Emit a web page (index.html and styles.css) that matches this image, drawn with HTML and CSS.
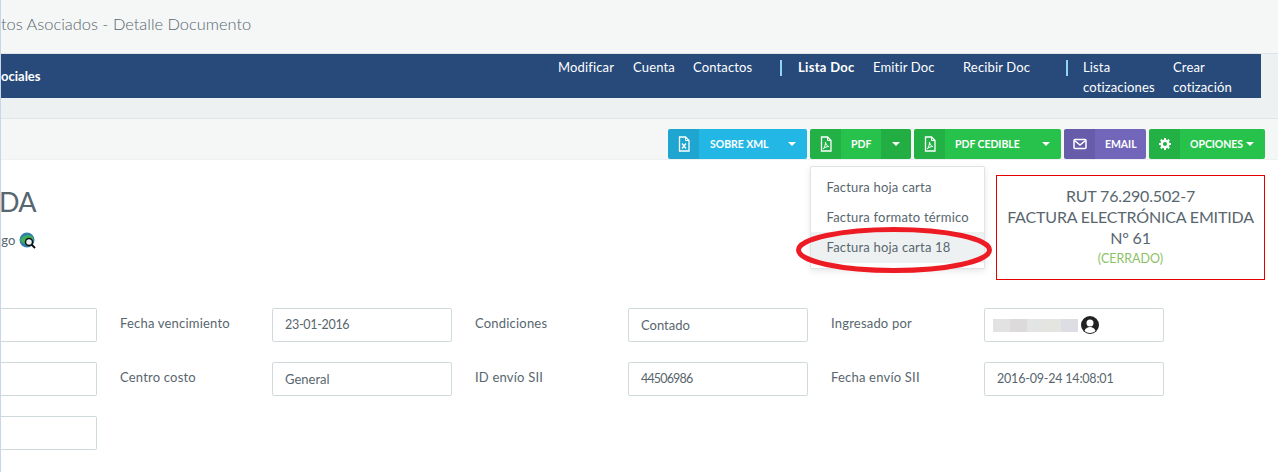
FILE: index.html
```html
<!DOCTYPE html>
<html lang="es">
<head>
<meta charset="utf-8">
<title>Detalle Documento</title>
<link rel="stylesheet" href="styles.css">
</head>
<body>
<div class="page">
  <header class="head"><h1 class="head-title">tos Asociados - Detalle Documento</h1></header>
  <div class="nav-wrap">
  <nav class="nav">
    <strong class="nav-brand">ociales</strong>
    <ul class="nav-list">
      <li class="w-75">Modificar</li>
      <li class="w-60">Cuenta</li>
      <li class="w-87">Contactos</li>
      <li class="sep w-18"></li>
      <li class="w-75 active">Lista Doc</li>
      <li class="w-90">Emitir Doc</li>
      <li class="w-103">Recibir Doc</li>
      <li class="sep w-17"></li>
      <li class="w-90">Lista cotizaciones</li>
      <li class="w-88">Crear cotización</li>
    </ul>
  </nav>
  </div>
  <div class="band"></div>
  <div class="toolbar">
    <div class="btn btn-blue b-sobre">
      <span class="ico"><svg width="14" height="16" viewBox="0 0 14 16"><path d="M2.500 1h6l3.500 3.500V15h-9.500z" fill="none" stroke="#fff" stroke-width="1.300"/><path d="M8.500 1v3.500H12" fill="none" stroke="#fff"/><path d="M5 7.500l4 5M9 7.500l-4 5" stroke="#fff" stroke-width="1.300"/></svg></span>
      <span class="lbl">SOBRE XML</span><i class="caret c-sobre"></i>
    </div>
    <div class="btn btn-green b-pdf">
      <span class="ico"><svg width="14" height="16" viewBox="0 0 14 16"><path d="M2.500 1h6l3.500 3.500V15h-9.500z" fill="none" stroke="#fff" stroke-width="1.300"/><path d="M8.500 1v3.500H12" fill="none" stroke="#fff"/><path d="M4 13c2-1.500 2.500-5 2.500-7 .5 3 2 4.500 3.500 4.500-2 0-4 .7-6 2.500z" fill="none" stroke="#fff"/></svg></span>
      <span class="lbl">PDF</span>
      <span class="split"><i class="caret"></i></span>
      <div class="menu">
        <a class="menu-item">Factura hoja carta</a>
        <a class="menu-item">Factura formato térmico</a>
        <a class="menu-item hover">Factura hoja carta 18</a>
      </div>
    </div>
    <div class="btn btn-green b-cedible">
      <span class="ico"><svg width="14" height="16" viewBox="0 0 14 16"><path d="M2.500 1h6l3.500 3.500V15h-9.500z" fill="none" stroke="#fff" stroke-width="1.300"/><path d="M8.500 1v3.500H12" fill="none" stroke="#fff"/><path d="M4 13c2-1.500 2.500-5 2.500-7 .5 3 2 4.500 3.500 4.500-2 0-4 .7-6 2.500z" fill="none" stroke="#fff"/></svg></span>
      <span class="lbl">PDF CEDIBLE</span><i class="caret c-sobre"></i>
    </div>
    <div class="btn btn-purple b-email">
      <span class="ico"><svg width="14" height="12" viewBox="0 0 14 12"><rect x="1" y="1.500" width="12" height="9" rx="1" fill="none" stroke="#fff" stroke-width="1.500"/><path d="M1.500 2.500L7 7l5.500-4.500" fill="none" stroke="#fff" stroke-width="1.500"/></svg></span>
      <span class="lbl">EMAIL</span>
    </div>
    <div class="btn btn-green b-opciones">
      <span class="ico"><svg width="12" height="12" viewBox="0 0 12 12"><circle cx="6" cy="6" r="3.300" fill="none" stroke="#fff" stroke-width="2.400"/><path d="M6 0v2.500M6 9.500V12M0 6h2.500M9.500 6H12M1.800 1.800l1.700 1.700M8.500 8.500l1.700 1.700M1.800 10.200l1.700-1.700M8.500 3.500l1.700-1.700" stroke="#fff" stroke-width="2"/></svg></span>
      <span class="lbl">OPCIONES</span><i class="caret c-op"></i>
    </div>
  </div>
  <main class="content">
    <section class="top">
      <div class="ident">
        <h2 class="ident-name">DA</h2>
        <p class="ident-sub">ngo
          <svg class="globe" width="17" height="17" viewBox="0 0 17 17"><circle cx="8" cy="8" r="7.500" fill="#2f7fa8"/><path d="M1 8c3-5 9-6 13-3 1 3-2 8-6 7-3 0-5-1-7-4z" fill="#3fae5a"/><circle cx="10" cy="10" r="3.500" fill="#e8f2f2" stroke="#111" stroke-width="1.500"/><path d="M12.500 12.500L16 16" stroke="#111" stroke-width="2"/></svg>
        </p>
      </div>
      <div class="rut">
        <div>RUT 76.290.502-7</div>
        <div>FACTURA ELECTRÓNICA EMITIDA</div>
        <div>N° 61</div>
        <div class="rut-state">(CERRADO)</div>
      </div>
    </section>
    <section class="form">
      <div class="field first"></div>
      <div class="lab">Fecha vencimiento</div><div class="field num-b">23-01-2016</div>
      <div class="lab">Condiciones</div><div class="field">Contado</div>
      <div class="lab">Ingresado por</div>
      <div class="field user">
        <span class="blur"><b></b><b></b><b></b><b></b><b></b></span>
        <svg width="18" height="18" viewBox="0 0 18 18"><circle cx="9" cy="9" r="9" fill="#222"/><circle cx="9" cy="7" r="3.500" fill="#fff"/><path d="M3.500 15c1-3 3-4 5.500-4s4.500 1 5.500 4c-3 2.500-8 2.500-11 0z" fill="#fff"/></svg>
      </div>
      <div class="field first"></div>
      <div class="lab">Centro costo</div><div class="field">General</div>
      <div class="lab">ID envío SII</div><div class="field num-a">44506986</div>
      <div class="lab">Fecha envío SII</div><div class="field num-c">2016-09-24 14:08:01</div>
      <div class="field first"></div>
    </section>
  </main>
  <svg class="mark" width="199" height="50" viewBox="0 0 199 50"><ellipse cx="99" cy="25" rx="95.500" ry="20.500" fill="none" stroke="#ed1c24" stroke-width="5"/></svg>
</div>
</body>
</html>
```
FILE: styles.css
```css
* { box-sizing: border-box; }
html, body { margin: 0; padding: 0; }
body { font-family: "Lato", "Liberation Sans", sans-serif; font-size: 13px; color: #58666e; background: #fff; }
.page { position: relative; width: 1278px; height: 472px; overflow: hidden; border-left: 1px solid #c9d5ea; }
.head { height: 54px; background: #f5f7f7; display: flex; align-items: center; border-bottom: 1px solid #dee5e7; }
.head-title { margin: -7px 0 0 0; font-size: 16.400px; font-weight: 300; color: #58666e; }
.nav-wrap { background: #eef1f2; }
.nav { height: 44px; width: 1260px; background: #274a7a; color: #fff; display: flex; justify-content: space-between; letter-spacing: .15px; }
.nav-brand { margin-top: 14px; font-size: 13px; line-height: 16px; letter-spacing: 0; }
.nav-list { list-style: none; margin: 3px 0 0; padding: 0; display: flex; line-height: 20px; width: 703px; }
.nav-list li { padding: 0 2px 0 0; }
.nav-list .active { font-weight: 700; letter-spacing: .3px; }
.w-75 { width: 75px; } .w-60 { width: 60px; } .w-87 { width: 87px; } .w-18 { width: 18px; }
.w-90 { width: 90px; } .w-103 { width: 103px; } .w-17 { width: 17px; } .w-88 { width: 88px; }
.nav-list .sep::before { content: ""; display: block; width: 2px; height: 16px; margin-top: 3px; background: #8fd5f0; }
.band { height: 21px; background: #eef1f2; border-bottom: 1px solid #dee5e7; }
.toolbar { height: 41px; background: #f5f7f7; border-bottom: 1px solid #edf1f2; display: flex; justify-content: flex-end; gap: 3px; padding: 10px 13px 0 0; }
.btn { position: relative; height: 30px; display: flex; align-items: center; color: #fff; font-size: 10.500px; font-weight: 700; border-radius: 2px; }
.ico { flex: none; width: 31px; height: 30px; display: flex; align-items: center; justify-content: center; border-radius: 2px 0 0 2px; background: rgba(0,0,0,.09); }
.lbl { flex: none; margin-top: -1px; letter-spacing: -.05px; }
.btn-blue { background: #23b7e5; }
.btn-green { background: #27c24c; }
.btn-purple { background: #7266ba; }
.b-sobre { width: 139px; } .b-sobre .lbl { margin-left: 11px; }
.b-pdf { width: 101px; } .b-pdf .lbl { margin-left: 10px; }
.b-cedible { width: 147px; } .b-cedible .lbl { margin-left: 10px; }
.b-email { width: 82px; } .b-email .lbl { margin-left: 10px; }
.b-opciones { width: 116px; } .b-opciones .lbl { margin-left: 10px; }
.caret { display: block; width: 0; height: 0; border-left: 4px solid transparent; border-right: 4px solid transparent; border-top: 4px solid #fff; }
.c-sobre { margin-left: auto; margin-right: 11px; }
.c-op { margin-left: 3px; }
.split { margin-left: auto; width: 30px; height: 30px; display: flex; align-items: center; justify-content: center; background: rgba(0,0,0,.1); border-radius: 0 2px 2px 0; }
.menu { position: absolute; top: 37px; left: 0; width: 175px; height: 103px; padding: 5px 0 0; background: #fff; border: 1px solid #dfe4e6; border-radius: 2px; box-shadow: 0 2px 6px rgba(0,0,0,.1); color: #58666e; font-size: 13px; font-weight: 400; letter-spacing: .2px; z-index: 2; }
.menu-item { display: block; height: 30px; line-height: 30px; padding-left: 15.500px; }
.hover { background: #edf1f2; height: 31px; }
.top { display: flex; justify-content: space-between; height: 148px; padding: 15px 13px 0 1px; }
.ident-name { margin: 12px 0 0 -3px; font-size: 27px; line-height: 30px; font-weight: 400; letter-spacing: -.8px; }
.ident-sub { margin: 14px 0 0 -8px; font-size: 13px; line-height: 18px; display: flex; align-items: center; gap: 4px; }
.rut { width: 269px; height: 105px; border: 1px solid #e60000; text-align: center; font-size: 16px; line-height: 21px; padding-top: 9px; letter-spacing: -.17px; }
.rut-state { font-size: 12.500px; line-height: 22px; color: #8cc265; letter-spacing: 0; }
.form { display: grid; grid-template-columns: 96px 175px 180px 176px 180px 176px 180px; grid-auto-rows: 34px; row-gap: 20px; }
.form .lab { padding-left: 23px; line-height: 30px; letter-spacing: .2px; white-space: nowrap; }
.form .field { height: 34px; border: 1px solid #cfdadd; border-radius: 2px; line-height: 32px; padding-left: 12px; }
.form .num-a { font-size: 12.500px; letter-spacing: -.83px; }
.form .num-b { font-size: 12.500px; letter-spacing: -.3px; }
.form .num-c { font-size: 12.500px; letter-spacing: -.2px; }
.form .first { border-left: 0; border-radius: 0 2px 2px 0; }
.form .user { display: flex; align-items: center; gap: 3px; padding-left: 8px; }
.blur { display: flex; width: 85px; height: 13px; filter: blur(.6px); }
.blur b { flex: 1; background: #e2e2e2; }
.blur b:nth-child(2) { background: #dcdadb; }
.blur b:nth-child(3) { background: #e2e5e4; }
.blur b:nth-child(4) { background: #e4e4e0; }
.blur b:nth-child(5) { background: #dddee3; }
.mark { position: absolute; left: 794px; top: 225px; z-index: 3; }
```
